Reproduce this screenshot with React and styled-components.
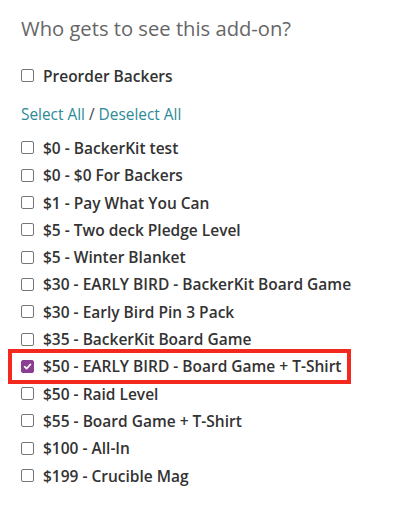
import React from "react";
import styled, { createGlobalStyle } from "styled-components";

const GlobalStyle = createGlobalStyle`
  body {
    margin: 0;
    background: #fff;
    font-family: "Open Sans", "Liberation Sans", sans-serif;
  }
`;

const Panel = styled.div`
  padding: 14px 0 0 21px;
  width: 402px;
  box-sizing: border-box;
`;

const Title = styled.h2`
  margin: 0;
  font-size: 20.2px;
  font-weight: 400;
  color: #666;
  line-height: 28px;
`;

const Row = styled.label`
  display: flex;
  align-items: center;
  height: 27.3px;
  gap: 9px;
  font-size: 15.5px;
  font-weight: 600;
  color: #333;
  box-sizing: content-box;
  width: fit-content;

  ${({ marked }) =>
    marked &&
    `
    border: 4px solid #f3281f;
    margin: -4px 0 -4px -13px;
    padding: 0 6px 0 9px;
  `}
`;

const Box = styled.span`
  width: 13px;
  height: 13px;
  flex: none;
  box-sizing: border-box;
  border-radius: 2px;
  border: 1px solid ${({ checked }) => (checked ? "#8a3e92" : "#767676")};
  background: ${({ checked }) => (checked ? "#8a3e92" : "#fff")};
  display: flex;
  align-items: center;
  justify-content: center;
`;

const Group = styled.div`
  margin-top: ${({ top }) => top}px;
`;

const Links = styled.div`
  margin: 16px 0 9px;
  font-size: 15.4px;
  color: #444;
  line-height: 20px;
`;

const Link = styled.a`
  color: #2c8a98;
  text-decoration: none;
`;

const levels = [
  "$0 - BackerKit test",
  "$0 - $0 For Backers",
  "$1 - Pay What You Can",
  "$5 - Two deck Pledge Level",
  "$5 - Winter Blanket",
  "$30 - EARLY BIRD - BackerKit Board Game",
  "$30 - Early Bird Pin 3 Pack",
  "$35 - BackerKit Board Game",
  "$50 - EARLY BIRD - Board Game + T-Shirt",
  "$50 - Raid Level",
  "$55 - Board Game + T-Shirt",
  "$100 - All-In",
  "$199 - Crucible Mag",
];

const Check = ({ checked }) => (
  <Box checked={checked}>
    {checked && (
      <svg width="9" height="9" viewBox="0 0 10 10">
        <path
          d="M1.8 5.2 L4 7.4 L8.3 2.6"
          fill="none"
          stroke="#fff"
          strokeWidth="1.8"
          strokeLinecap="round"
          strokeLinejoin="round"
        />
      </svg>
    )}
  </Box>
);

export default function App() {
  return (
    <>
      <GlobalStyle />
      <Panel>
        <Title>Who gets to see this add-on?</Title>
        <Group top={20}>
          <Row>
            <Check />
            Preorder Backers
          </Row>
        </Group>
        <Links>
          <Link href="#">Select All</Link> / <Link href="#">Deselect All</Link>
        </Links>
        {levels.map((name, i) => {
          const picked = i === 8;
          return (
            <Row key={i} marked={picked}>
              <Check checked={picked} />
              {name}
            </Row>
          );
        })}
      </Panel>
    </>
  );
}
